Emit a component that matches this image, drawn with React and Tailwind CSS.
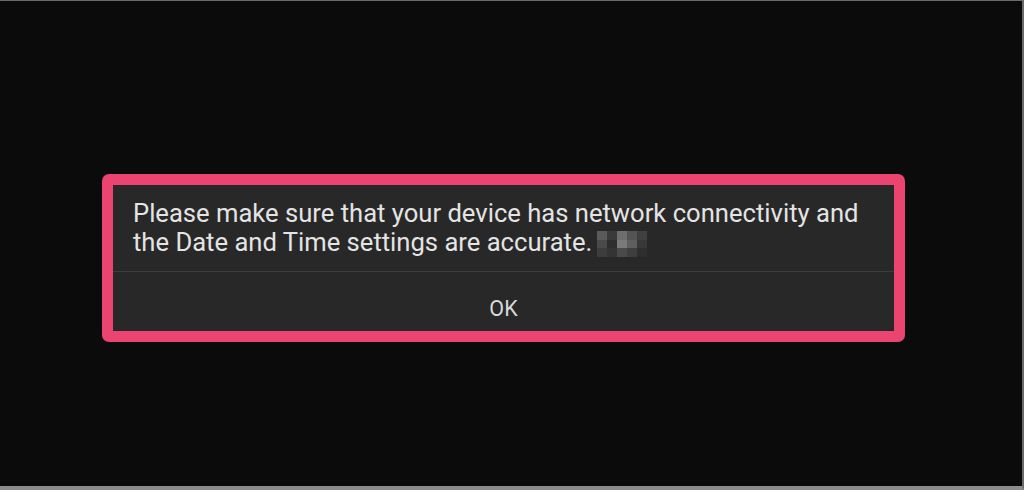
export default function App() {
  const blob = [
    ["#5a5a5a", "#3a3a3a", "#6e6e6e", "#545454", "#404040"],
    ["#4a4a4a", "#2e2e2e", "#7a7a7a", "#5e5e5e", "#383838"],
    ["#3c3c3c", "#343434", "#4a4a4a", "#3e3e3e", "#2e2e2e"],
  ];
  return (
    <div className="w-[1024px] h-[490px] bg-[#0b0b0b] border-t border-t-[#6a6a6a] border-r-2 border-r-[#6a6a6a] border-b-4 border-b-[#8c8c8c] box-border overflow-hidden" style={{ fontFamily: "Roboto, 'Noto Sans', sans-serif" }}>
      <div className="pl-[102px] pt-[173px]">
        <div className="w-[803px] h-[168px] bg-[#ec4470] rounded-[7px] p-[11px] box-border">
          <div className="h-full bg-[#282828] flex flex-col">
            <div className="px-[20px] pt-[14px] pb-[14px] border-b border-b-[#3d3d3d] text-[25.6px] leading-[29px] text-[#e4e4e4] whitespace-nowrap">
              <div>Please make sure that your device has network connectivity and</div>
              <div className="flex items-center h-[29px]">
                <span>the Date and Time settings are accurate.</span>
                <span className="ml-[5px] mt-[3px] inline-grid grid-cols-5 w-[50px] h-[26px]">
                  {blob.flat().map((c, i) => (
                    <span key={i} style={{ backgroundColor: c }} />
                  ))}
                </span>
              </div>
            </div>
            <div className="flex-1 flex items-center justify-center pt-[16px] text-[21.5px] text-[#d8d8d8]">
              OK
            </div>
          </div>
        </div>
      </div>
    </div>
  );
}
